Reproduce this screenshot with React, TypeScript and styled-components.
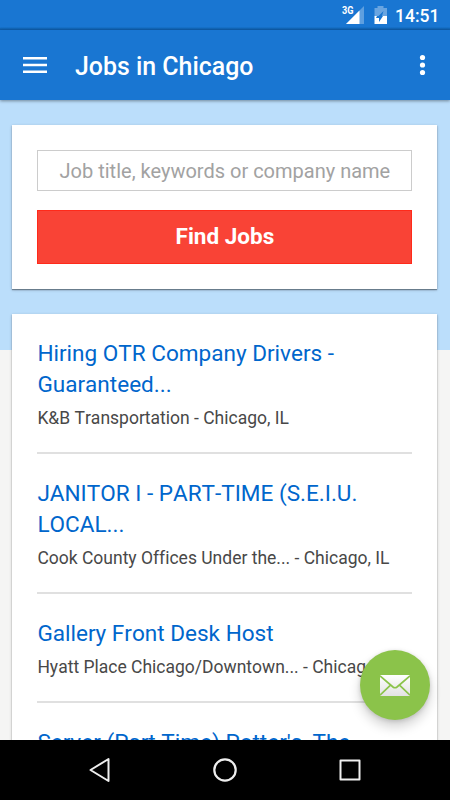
import React from "react";
import styled, { createGlobalStyle } from "styled-components";

const GlobalStyle = createGlobalStyle`
  * { box-sizing: border-box; }
  body { margin: 0; overflow: hidden; font-family: Roboto, "Liberation Sans", sans-serif; }
`;

const Screen = styled.div`
  position: relative;
  width: 450px;
  height: 800px;
  display: flex;
  flex-direction: column;
  overflow: hidden;
  background: #f5f5f4;
`;

const StatusBar = styled.div`
  flex: none;
  height: 30px;
  display: flex;
  align-items: center;
  justify-content: flex-end;
  padding-right: 11px;
  background: linear-gradient(#1976d2 27px, #136bbd 28px, #0c5ba9 30px);
  color: #fff;
`;

const Clock = styled.span`
  width: 44px;
  margin-left: 8px;
  font-size: 17.5px;
  font-weight: 500;
  line-height: 30px;
  white-space: nowrap;
  padding-top: 1px;
`;

const AppBar = styled.header`
  position: relative;
  flex: none;
  height: 70px;
  display: flex;
  align-items: center;
  padding: 0 23px;
  background: #1976d2;
  color: #fff;
  box-shadow: 0 1px 3px rgba(0, 0, 0, 0.4);
`;

const IconButton = styled.button`
  display: flex;
  padding: 0;
  border: 0;
  background: none;
  color: inherit;
`;

const Title = styled.h1`
  flex: 1;
  margin: 4px 0 0 28px;
  font-size: 24.9px;
  font-weight: 500;
  line-height: 32px;
  white-space: nowrap;
`;

const Content = styled.main`
  flex: 1;
  min-height: 0;
  overflow: hidden;
  display: flex;
  flex-direction: column;
  gap: 25px;
  padding: 25px 12.6px 0 12.4px;
  background: linear-gradient(#bbdefb 250px, #f5f5f4 250px);
`;

const Card = styled.section`
  flex: none;
  background: #fff;
  box-shadow: 0 1px 3px rgba(0, 0, 0, 0.22), 0 1px 1px rgba(0, 0, 0, 0.35);
`;

const SearchCard = styled(Card)`
  height: 164px;
  display: flex;
  flex-direction: column;
  gap: 19px;
  padding: 25px 25px 0;
`;

const SearchInput = styled.input`
  width: 100%;
  height: 41px;
  padding: 0;
  border: 1px solid #ccc;
  border-radius: 0;
  background: #fff;
  font: 400 20px/38px Roboto, sans-serif;
  text-align: center;
  outline: none;
  &::placeholder { color: #a2a2a2; opacity: 1; }
`;

const SearchButton = styled.button`
  height: 54px;
  padding: 0 0 2px;
  border: 1px solid #ff2a1a;
  background: #f94336;
  color: #fff;
  font: 700 22.5px/50px Roboto, sans-serif;
`;

const JobList = styled(Card)`
  padding: 0 25px;
`;

const Job = styled.article`
  padding: 24px 0 19px;
  border-bottom: 2px solid #e0e0e0;
`;

const JobTitle = styled.h2`
  margin: 0;
  color: #0066cc;
  font-size: 22.55px;
  font-weight: 400;
  font-kerning: none;
  line-height: 31px;
  white-space: pre-line;
`;

const Employer = styled.p`
  margin: 4px 0 0;
  color: #484848;
  font-size: 17.5px;
  font-kerning: none;
  font-variant-ligatures: none;
  line-height: 29px;
  white-space: nowrap;
`;

const Fab = styled.button`
  position: absolute;
  right: 20px;
  bottom: 80px;
  width: 70px;
  height: 70px;
  display: flex;
  align-items: center;
  justify-content: center;
  padding: 0;
  border: 0;
  border-radius: 50%;
  background: #8bc34a;
  box-shadow: 0 7px 12px rgba(0, 0, 0, 0.18), 0 1px 4px rgba(0, 0, 0, 0.14);
`;

const NavBar = styled.nav`
  position: relative;
  flex: none;
  height: 60px;
  display: flex;
  align-items: center;
  justify-content: center;
  gap: 93px;
  background: #000;
`;

const StatusIcons = () => (
  <svg width="46" height="30" viewBox="341 0 46 30" fill="#fff">
    <text x="342" y="14" fontFamily="Roboto" fontSize="10.500" fontWeight="700" textLength="11.500" lengthAdjust="spacingAndGlyphs">3G</text>
    <path d="M364 6v18h-18z" opacity=".3" />
    <path d="M359.500 10.500V24H346z" />
    <path d="M374.500 8h3V6h6v2h3.500v8h-5l1.500-5-5 5h-4z" opacity=".35" />
    <path d="M374.500 16h2.500l-1 2h3v4l4-6h4v8h-12.500z" />
  </svg>
);

const MenuIcon = () => (
  <svg width="24" height="18" viewBox="0 0 24 18" stroke="#fff" strokeWidth="2.400">
    <path d="M0 2.200h24M0 9h24M0 15.800h24" />
  </svg>
);

const MoreIcon = () => (
  <svg width="9" height="22" viewBox="0 0 9 22" fill="#fff">
    <circle cx="4.500" cy="3.500" r="2.600" />
    <circle cx="4.500" cy="11" r="2.600" />
    <circle cx="4.500" cy="18.500" r="2.600" />
  </svg>
);

const MailIcon = () => (
  <svg width="30" height="21" viewBox="0 0 30 21">
    <defs>
      <linearGradient id="paper" x2="0" y2="1">
        <stop stopColor="#fff" />
        <stop offset="1" stopColor="#e2e2e2" />
      </linearGradient>
    </defs>
    <rect width="30" height="21" rx=".8" fill="url(#paper)" />
    <path d="M0 .8L13 12q2 1.500 4 0L30 .8M0 20.200l10.500-10M30 20.200l-10.500-10" fill="none" stroke="#8bc34a" strokeWidth="1.700" />
  </svg>
);

const BackIcon = () => (
  <svg width="32" height="32" viewBox="0 0 32 32" fill="none" stroke="#eee" strokeWidth="2" strokeLinejoin="round">
    <path d="M24.500 5v22L6.500 16z" />
  </svg>
);

const HomeIcon = () => (
  <svg width="32" height="32" viewBox="0 0 32 32" fill="none" stroke="#eee" strokeWidth="2.200">
    <circle cx="16" cy="16" r="10.700" />
  </svg>
);

const RecentIcon = () => (
  <svg width="32" height="32" viewBox="0 0 32 32" fill="none" stroke="#eee" strokeWidth="2" strokeLinejoin="round">
    <path d="M6.500 6.500h19v19h-19z" />
  </svg>
);

const jobs = [
  { title: "Hiring OTR Company Drivers -\nGuaranteed...", employer: "K&B Transportation - Chicago, IL" },
  { title: "JANITOR I - PART-TIME (S.E.I.U.\nLOCAL...", employer: "Cook County Offices Under the... - Chicago, IL" },
  { title: "Gallery Front Desk Host", employer: "Hyatt Place Chicago/Downtown... - Chicago, IL" },
  { title: "Server (Part Time) Potter's, The", employer: "" },
];

export default function App() {
  return (
    <Screen>
      <GlobalStyle />
      <StatusBar>
        <StatusIcons />
        <Clock>14:51</Clock>
      </StatusBar>
      <AppBar>
        <IconButton aria-label="Menu"><MenuIcon /></IconButton>
        <Title>Jobs in Chicago</Title>
        <IconButton aria-label="More options"><MoreIcon /></IconButton>
      </AppBar>
      <Content>
        <SearchCard>
          <SearchInput placeholder="Job title, keywords or company name" />
          <SearchButton>Find Jobs</SearchButton>
        </SearchCard>
        <JobList>
          {jobs.map((job) => (
            <Job key={job.title}>
              <JobTitle>{job.title}</JobTitle>
              <Employer>{job.employer}</Employer>
            </Job>
          ))}
        </JobList>
      </Content>
      <NavBar>
        <IconButton aria-label="Back"><BackIcon /></IconButton>
        <IconButton aria-label="Home"><HomeIcon /></IconButton>
        <IconButton aria-label="Recent apps"><RecentIcon /></IconButton>
      </NavBar>
      <Fab aria-label="Email jobs"><MailIcon /></Fab>
    </Screen>
  );
}
